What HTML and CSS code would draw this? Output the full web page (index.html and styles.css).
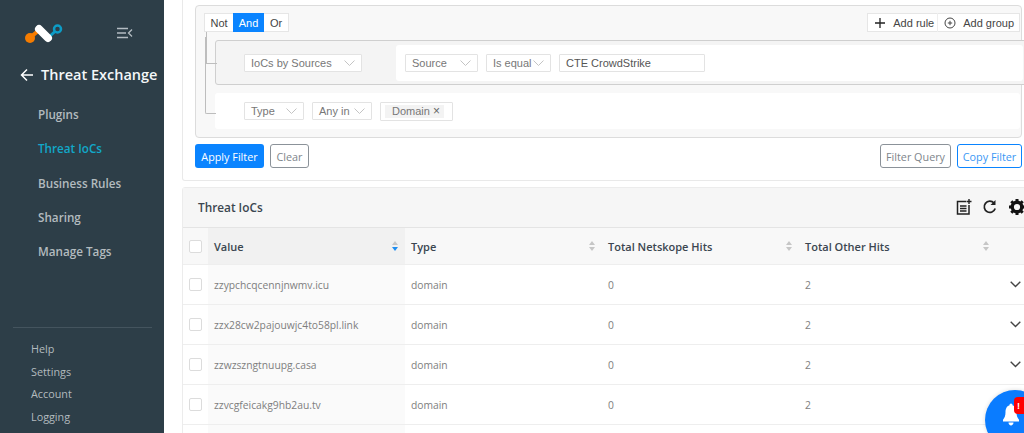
FILE: index.html
```html
<!DOCTYPE html>
<html lang="en">
<head>
<meta charset="utf-8">
<title>Threat IoCs</title>
<link rel="stylesheet" href="styles.css">
</head>
<body>
<div class="app">
  <aside class="sidebar">
    <div class="brand">
      <svg class="logo" width="40" height="22" viewBox="0 0 40 22">
        <path d="M8 13 L14 8" stroke="#f57c00" stroke-width="4" fill="none"/>
        <circle cx="6" cy="15" r="5" fill="#f57c00"/>
        <path d="M26 13 L31 8.500" stroke="#0d9cc6" stroke-width="3" fill="none"/>
        <circle cx="33.500" cy="6" r="3.500" fill="none" stroke="#0d9cc6" stroke-width="2.500"/>
        <path d="M15 6 L24 15" stroke="#fff" stroke-width="8" stroke-linecap="round" fill="none"/>
      </svg>
      <svg class="collapse" width="16" height="12" viewBox="0 0 16 12">
        <path d="M0 1.500H11M0 6H9M0 10.500H11M15 2.500L11.500 6L15 9.500" stroke="#b4bcc2" stroke-width="1.300" fill="none"/>
      </svg>
    </div>
    <div class="back">
      <svg width="14" height="14" viewBox="0 0 14 14"><path d="M13 7H1.500M7 1.500L1.500 7L7 12.500" stroke="#fff" stroke-width="1.500" fill="none"/></svg>
      <span>Threat Exchange</span>
    </div>
    <nav class="nav">
      <a class="nav-item">Plugins</a>
      <a class="nav-item active">Threat IoCs</a>
      <a class="nav-item">Business Rules</a>
      <a class="nav-item">Sharing</a>
      <a class="nav-item">Manage Tags</a>
    </nav>
    <div class="foot">
      <a>Help</a>
      <a>Settings</a>
      <a>Account</a>
      <a>Logging</a>
    </div>
  </aside>
  <main class="main">
    <section class="filter-card">
      <div class="builder">
        <div class="builder-top">
          <div class="btn-group">
            <span class="seg s-not">Not</span><span class="seg on s-and">And</span><span class="seg s-or">Or</span>
          </div>
          <div class="btn-group">
            <span class="seg add">
              <svg width="12" height="12" viewBox="0 0 12 12"><path d="M6 1V11M1 6H11" stroke="#222" stroke-width="1.300"/></svg>
              Add rule</span><span class="seg add">
              <svg width="12" height="12" viewBox="0 0 12 12"><circle cx="6" cy="6" r="5" fill="none" stroke="#444"/><path d="M6 3.800V8.200M3.800 6H8.200" stroke="#444"/></svg>
              Add group</span>
          </div>
        </div>
        <div class="tree">
          <div class="group">
            <span class="select s-ioc">IoCs by Sources<svg class="chev" width="11" height="6" viewBox="0 0 11 6"><path d="M.5.500L5.500 5.500L10.500.500"/></svg></span>
            <div class="rule rule-inner">
              <span class="select s-source">Source<svg class="chev" width="11" height="6" viewBox="0 0 11 6"><path d="M.5.500L5.500 5.500L10.500.500"/></svg></span>
              <span class="select s-equal">Is equal<svg class="chev" width="11" height="6" viewBox="0 0 11 6"><path d="M.5.500L5.500 5.500L10.500.500"/></svg></span>
              <span class="input">CTE CrowdStrike</span>
            </div>
          </div>
          <div class="rule rule-outer">
            <span class="select s-type">Type<svg class="chev" width="11" height="6" viewBox="0 0 11 6"><path d="M.5.500L5.500 5.500L10.500.500"/></svg></span>
            <span class="select s-any">Any in<svg class="chev" width="11" height="6" viewBox="0 0 11 6"><path d="M.5.500L5.500 5.500L10.500.500"/></svg></span>
            <span class="tags"><span class="tag">Domain <i class="x">×</i></span></span>
          </div>
        </div>
      </div>
      <div class="actions">
        <span class="btn primary">Apply Filter</span>
        <span class="btn ghost">Clear</span>
        <span class="spacer"></span>
        <span class="btn ghost query">Filter Query</span>
        <span class="btn outline">Copy Filter</span>
      </div>
    </section>
    <section class="table-card">
      <header class="table-head">
        <h2>Threat IoCs</h2>
        <div class="tools">
          <svg width="16" height="16" viewBox="0 0 16 16"><path d="M10 2.500H1.500V15H13V6" fill="none" stroke="#222" stroke-width="1.500"/><path d="M4 7H10.500M4 9.500H10.500M4 12H10.500" stroke="#222" stroke-width="1.300"/><path d="M13 0V5M10.500 2.500H15.500" stroke="#222" stroke-width="1.400"/></svg>
          <svg width="16" height="16" viewBox="0 0 16 16"><path d="M13.200 9.500A5.600 5.600 0 1 1 12 4" fill="none" stroke="#222" stroke-width="1.700"/><path d="M13.500 1V6H8.500Z" fill="#222"/></svg>
          <svg class="gear" width="18" height="18" viewBox="0 0 18 18"><circle cx="9" cy="9" r="4.800" fill="none" stroke="#111" stroke-width="3.400"/><path d="M9 1V4M9 14V17M1 9H4M14 9H17M3.300 3.300L5.500 5.500M12.500 12.500L14.700 14.700M3.300 14.700L5.500 12.500M12.500 5.500L14.700 3.300" stroke="#111" stroke-width="3"/></svg>
        </div>
      </header>
      <div class="row header">
        <span class="cell check"><i class="box"></i></span>
        <span class="cell col sorted">Value<i class="sort"><b class="up"></b><b class="down blue"></b></i></span>
        <span class="cell col">Type<i class="sort"><b class="up"></b><b class="down"></b></i></span>
        <span class="cell col">Total Netskope Hits<i class="sort"><b class="up"></b><b class="down"></b></i></span>
        <span class="cell col">Total Other Hits<i class="sort"><b class="up"></b><b class="down"></b></i></span>
        <span class="cell"></span>
      </div>
      <div class="row">
        <span class="cell check"><i class="box"></i></span>
        <span class="cell col sorted-body">zzypchcqcennjnwmv.icu</span>
        <span class="cell col">domain</span>
        <span class="cell col">0</span>
        <span class="cell col">2</span>
        <span class="cell more"><svg width="11" height="7" viewBox="0 0 11 7"><path d="M.7.700L5.500 5.500L10.300.700" fill="none" stroke="#444" stroke-width="1.400"/></svg></span>
      </div>
      <div class="row">
        <span class="cell check"><i class="box"></i></span>
        <span class="cell col sorted-body">zzx28cw2pajouwjc4to58pl.link</span>
        <span class="cell col">domain</span>
        <span class="cell col">0</span>
        <span class="cell col">2</span>
        <span class="cell more"><svg width="11" height="7" viewBox="0 0 11 7"><path d="M.7.700L5.500 5.500L10.300.700" fill="none" stroke="#444" stroke-width="1.400"/></svg></span>
      </div>
      <div class="row">
        <span class="cell check"><i class="box"></i></span>
        <span class="cell col sorted-body">zzwzszngtnuupg.casa</span>
        <span class="cell col">domain</span>
        <span class="cell col">0</span>
        <span class="cell col">2</span>
        <span class="cell more"><svg width="11" height="7" viewBox="0 0 11 7"><path d="M.7.700L5.500 5.500L10.300.700" fill="none" stroke="#444" stroke-width="1.400"/></svg></span>
      </div>
      <div class="row">
        <span class="cell check"><i class="box"></i></span>
        <span class="cell col sorted-body">zzvcgfeicakg9hb2au.tv</span>
        <span class="cell col">domain</span>
        <span class="cell col">0</span>
        <span class="cell col">2</span>
        <span class="cell more"><svg width="11" height="7" viewBox="0 0 11 7"><path d="M.7.700L5.500 5.500L10.300.700" fill="none" stroke="#444" stroke-width="1.400"/></svg></span>
      </div>
      <div class="row">
        <span class="cell check"></span>
        <span class="cell col sorted-body"></span>
        <span class="cell col"></span>
        <span class="cell col"></span>
        <span class="cell col"></span>
        <span class="cell more"></span>
      </div>
    </section>
  </main>
</div>
<div class="fab">
  <svg width="18" height="23" viewBox="0 0 18 20" preserveAspectRatio="none"><path d="M9 0.500C10 0.500 10.500 1.200 10.500 2C13.500 2.800 14.500 5.500 14.500 8C14.500 11 15.500 13 17 14.500V16H1V14.500C2.500 13 3.500 11 3.500 8C3.500 5.500 4.500 2.800 7.500 2C7.500 1.200 8 0.500 9 0.500ZM6.500 17H11.500C11.500 18.500 10.300 19.500 9 19.500C7.700 19.500 6.500 18.500 6.500 17Z" fill="#fff"/></svg>
  <span class="badge">!</span>
</div>
</body>
</html>
```
FILE: styles.css
```css
* { box-sizing: border-box; }
html, body { margin: 0; height: 100%; overflow: hidden; background: #fff; }
body { font-family: "Open Sans", "Noto Sans", sans-serif; }
.app { display: flex; height: 433px; width: 1024px; overflow: hidden; }

.sidebar { width: 164px; flex: none; background: #2d3e48; display: flex; flex-direction: column; color: #fff; }
.brand { height: 51px; padding: 22px 31px 0 24px; display: flex; justify-content: space-between; align-items: flex-start; }
.logo { margin-top: 1px; }
.collapse { margin-top: 5px; }
.back { display: flex; align-items: center; gap: 7px; padding: 14px 0 0 20px; font-size: 14.500px; font-weight: 600; line-height: 20px; white-space: nowrap; color: #f4f7f8; }
.nav { display: flex; flex-direction: column; padding: 19px 0 0 38px; gap: 14.250px; }
.nav-item { font-size: 11.700px; font-weight: 600; line-height: 20px; color: #b3bbbf; }
.nav-item.active { color: #12a8c9; }
.foot { margin: auto 12px 0 13px; border-top: 1px solid #44545e; padding: 13px 0 0 18px; display: flex; flex-direction: column; gap: 6.700px; height: 106px; }
.foot a { font-size: 10.800px; line-height: 16px; color: #b3bbbf; }

.main { flex: 1; min-width: 0; padding-left: 18px; display: flex; flex-direction: column; gap: 6px; }
.filter-card { width: 860px; height: 181px; flex: none; border: 1px solid #e9e9e9; border-top: 0; padding: 5px 0 0 12px; border-radius: 0 0 3px 3px; font-family: "Liberation Sans", Arial, sans-serif; }
.builder { width: 827px; height: 133px; background: #f8f8f8; border: 1px solid #dcdcdc; border-radius: 4px; padding: 7px 0 0 8px; font-size: 11px; color: #666; }
.builder-top { display: flex; justify-content: space-between; width: 816px; }
.btn-group { display: flex; background: #fff; border: 1px solid #e6e6e6; height: 19px; }
.seg { display: flex; align-items: center; justify-content: center; gap: 7px; color: #444; font-size: 11px; height: 19px; margin-top: -1px; white-space: nowrap; }
.s-not { width: 28px; }
.s-and { width: 31px; }
.s-or { width: 24px; }
.seg.on { background: #0a84ff; color: #fff; }
.seg.add { padding: 0 3px 0 6px; }
.seg.add + .seg.add { border-left: 1px solid #eee; padding-right: 5px; }
.tree { margin: 8px 0 0 11px; }
.group { width: 820px; height: 45px; background: #f4f4f4; border: 1px solid #cfcfcf; border-radius: 3px; padding: 0 0 0 28px; display: flex; align-items: center; gap: 34px; position: relative; }
.group::before { content: ""; position: absolute; left: -10px; top: -9px; width: 10px; height: 31px; border-left: 1px solid #bdbdbd; border-bottom: 1px solid #bdbdbd; }
.rule { background: #fff; border-radius: 3px; display: flex; align-items: center; gap: 8px; }
.rule-inner { width: 627px; height: 36px; padding-left: 9px; }
.rule-outer { width: 805px; height: 36px; margin-top: 8px; padding-left: 29px; position: relative; }
.rule-outer::before { content: ""; position: absolute; left: -10px; top: -56px; width: 10px; height: 76px; border-left: 1px solid #bdbdbd; border-bottom: 1px solid #bdbdbd; border-bottom-left-radius: 2px; }
.select, .input, .tags { height: 18px; background: #fff; border: 1px solid #e3e3e3; border-radius: 1px; display: flex; align-items: center; justify-content: space-between; padding: 0 6px; color: #777; white-space: nowrap; font-size: 11px; }
.chev { fill: none; stroke: #c4c4c4; stroke-width: 1; }
.s-ioc { width: 118px; }
.s-source { width: 73px; }
.s-equal { width: 65px; }
.input { width: 146px; color: #555; justify-content: flex-start; }
.s-type { width: 60px; }
.s-any { width: 60px; }
.tags { width: 73px; height: 19px; padding: 0 4px; }
.tag { background: #f3f3f3; padding: 0 4px 0 7px; line-height: 13px; height: 13px; font-size: 11px; white-space: nowrap; }
.x { font-style: normal; color: #666; font-size: 12px; }
.actions { display: flex; gap: 6px; width: 827px; margin-top: 6px; align-items: flex-start; }
.spacer { flex: 1; }
.btn { height: 24px; border-radius: 3px; display: flex; align-items: center; justify-content: center; font-size: 10.800px; font-family: "Open Sans", sans-serif; white-space: nowrap; }
.primary { width: 69px; background: #0a84ff; color: #fff; }
.ghost { border: 1px solid #8b9299; color: #7e858b; width: 39px; }
.query { width: 71px; }
.outline { border: 1px solid #0a84ff; color: #3b97f5; width: 65px; }

.table-card { width: 860px; flex: none; border: 1px solid #ececec; border-radius: 3px 0 0 0; }
.table-head { height: 40px; background: #f6f6f6; border-bottom: 1px solid #e4e4e4; display: flex; align-items: center; justify-content: space-between; padding: 0 0 2px 15px; }
.table-head h2 { margin: 0; font-size: 11.800px; font-weight: 600; color: #3b4650; }
.tools { display: flex; align-items: center; gap: 10px; width: 77px; flex: none; margin-right: 8px; }
.gear { flex: none; }
.row { display: grid; grid-template-columns: 25px 197px 197px 197px 197px 1fr; height: 40px; border-bottom: 1px solid #eee; align-items: stretch; }
.row.header { height: 37px; background: #f8f8f8; }
.row.header .cell { font-size: 11px; font-weight: 600; color: #3b4650; }
.cell { display: flex; align-items: center; font-size: 10.300px; color: #7e7e7e; white-space: nowrap; }
.col { padding: 0 6px; justify-content: space-between; }
.check { padding-left: 6px; }
.box { width: 13px; height: 13px; background: #fff; border: 1px solid #dcdcdc; border-radius: 2px; display: block; }
.row.header .sorted { background: #f1f1f1; }
.sorted-body { background: #fafafa; }
.sort { display: flex; flex-direction: column; gap: 1.500px; margin-right: 1px; }
.sort b { display: block; width: 0; height: 0; border-left: 3.500px solid transparent; border-right: 3.500px solid transparent; }
.sort .up { border-bottom: 4px solid #c6c6c6; }
.sort .down { border-top: 4px solid #c6c6c6; }
.sort .down.blue { border-top-color: #1f8ef1; }
.more { padding-left: 14px; }

.fab { position: fixed; left: 985px; top: 390px; width: 60px; height: 60px; border-radius: 50%; background: #0a7cff; box-shadow: 0 0 4px rgba(0,0,0,.15); }
.fab svg { position: absolute; left: 17px; top: 13px; }
.badge { position: absolute; left: 29px; top: 7px; width: 14px; height: 17px; background: #f00; color: #fff; border-radius: 4px; font-size: 9px; font-weight: 700; display: flex; align-items: center; justify-content: center; padding-right: 5px; font-family: "Liberation Sans", sans-serif; }
```
